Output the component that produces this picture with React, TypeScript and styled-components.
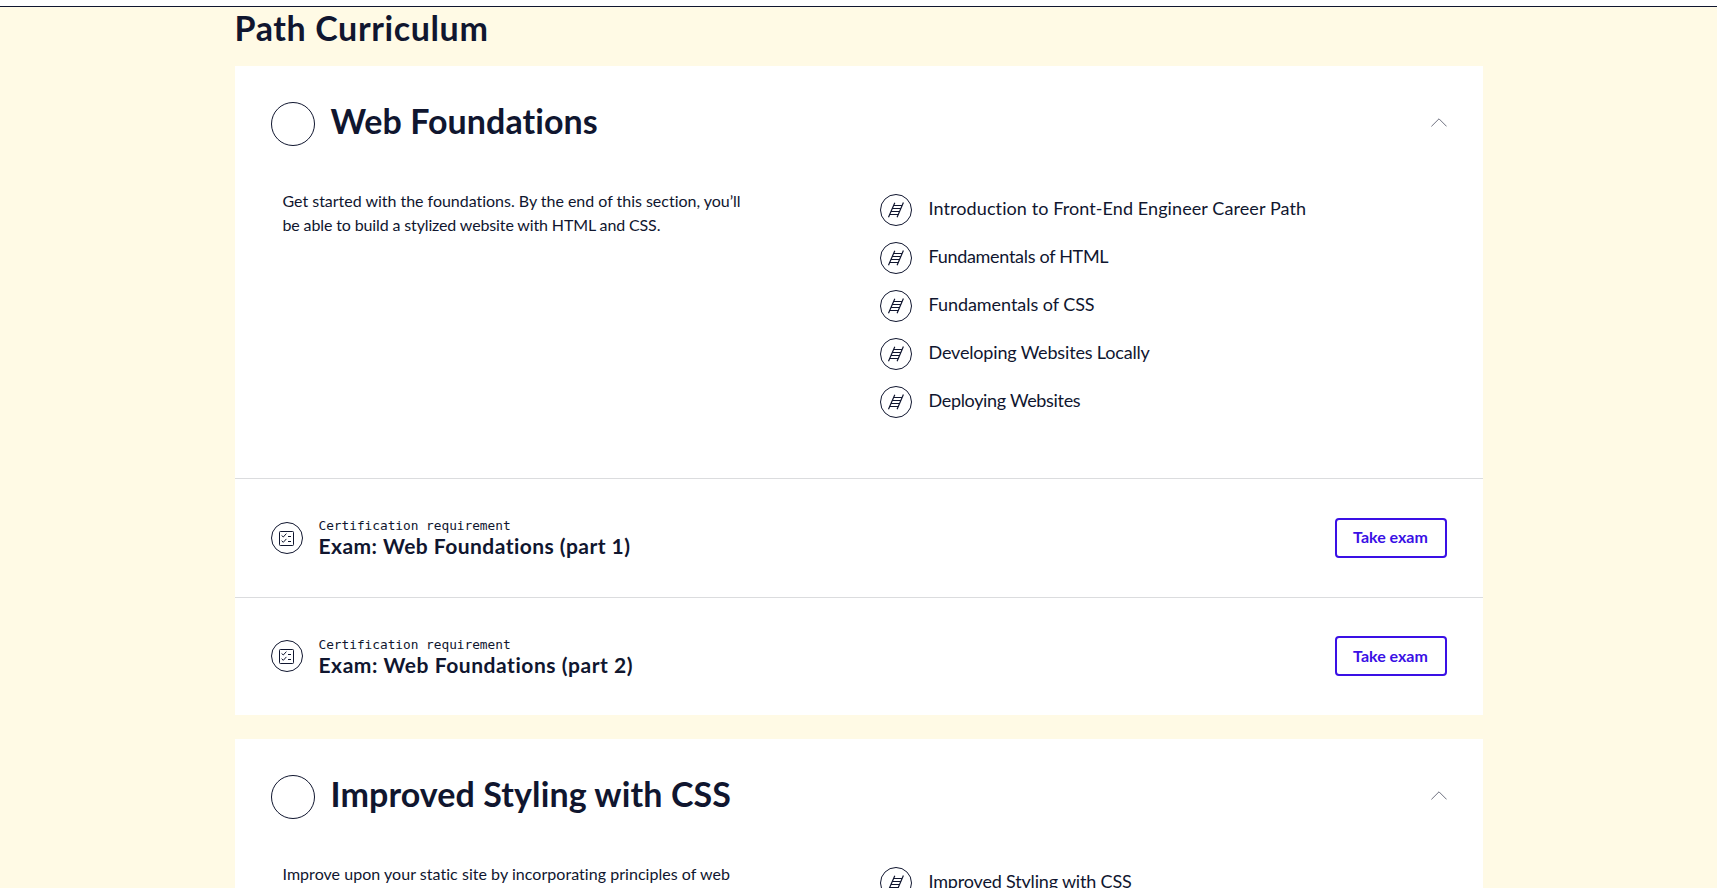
import React from 'react';
import styled, { createGlobalStyle } from 'styled-components';

const navy = '#10162f';
const hyper = '#3a10e5';

const GlobalStyle = createGlobalStyle`
  *, *::before, *::after { box-sizing: border-box; }
  html, body { height: 100%; }
  body {
    margin: 0;
    overflow: hidden;
    background: #fffae5;
    color: ${navy};
    font-family: Lato, "Liberation Sans", sans-serif;
    font-variant-ligatures: none;
  }
  h1, h2, h3, p, ul { margin: 0; padding: 0; font-weight: inherit; }
`;

const Page = styled.div`
  height: 888px;
  overflow: hidden;
`;

const TopBar = styled.div`
  height: 7px;
  background: #fff;
  border-bottom: 1px solid ${navy};
`;

const Content = styled.main`
  width: 1248px;
  margin: 0 auto;
`;

const PageTitle = styled.h1`
  height: 59px;
  font-size: 34px;
  font-weight: 700;
  line-height: 42px;
  letter-spacing: 0.62px;
`;

const Card = styled.section`
  margin-bottom: 24px;
  background: #fff;
`;

const CardHeader = styled.header`
  display: flex;
  align-items: center;
  gap: 16px;
  height: 116px;
  padding: 0 36px;
`;

const Progress = styled.span`
  width: 44px;
  height: 44px;
  border: 1px solid ${navy};
  border-radius: 50%;
`;

const CardTitle = styled.h2<{ $track: number }>`
  flex: 1;
  padding-bottom: 6px;
  font-size: 34px;
  font-weight: 700;
  line-height: 44px;
  letter-spacing: ${(p) => p.$track}px;
`;

const Chevron = styled.svg`
  display: block;
  margin-bottom: 3px;
`;

const CardBody = styled.div`
  display: grid;
  grid-template-columns: 597px 1fr;
  padding: 4px 36px 44px 48px;
`;

const Description = styled.p`
  padding-top: 3px;
  font-size: 16px;
  line-height: 24px;
`;

const Line = styled.span<{ $track: number }>`
  display: block;
  white-space: nowrap;
  letter-spacing: ${(p) => p.$track}px;
`;

const Modules = styled.ul`
  list-style: none;
  padding-top: 8px;
`;

const Module = styled.li<{ $track: number }>`
  display: flex;
  align-items: flex-start;
  gap: 17px;
  height: 48px;
  font-size: 18px;
  line-height: 28px;
  letter-spacing: ${(p) => p.$track}px;
`;

const Badge = styled.span`
  display: block;
  flex: none;
  width: 32px;
  height: 32px;
  border: 1px solid ${navy};
  border-radius: 50%;

  svg { display: block; margin: -1px; }
`;

const Exam = styled.div`
  display: flex;
  align-items: center;
  gap: 16px;
  height: 118.5px;
  padding: 0 36px;
  border-top: 1px solid #dbdcde;
`;

const ExamText = styled.div`
  flex: 1;
  padding-top: 1px;
`;

const Requirement = styled.p`
  font-family: "DejaVu Sans Mono", "Liberation Mono", monospace;
  font-size: 12.8px;
  line-height: 18px;
  letter-spacing: -0.02px;
`;

const ExamTitle = styled.h3<{ $track: number }>`
  margin-top: -2px;
  font-size: 21px;
  font-weight: 700;
  line-height: 26px;
  letter-spacing: ${(p) => p.$track}px;
`;

const ExamButton = styled.button`
  width: 112px;
  height: 40px;
  padding: 0 0 1px;
  border: 2px solid ${hyper};
  border-radius: 4px;
  background: #fff;
  color: ${hyper};
  font: 700 16px/24px Lato, sans-serif;
`;

const LadderIcon = () => (
  <svg width="32" height="32" viewBox="0 0 32 32" fill="none" stroke={navy} strokeWidth="1.2">
    <path d="M8.5 23.2 14.8 8.7M17.1 23.2 23.4 8.5" />
    <path d="M13.6 11.5H22M12.3 14.5H20.8M11 17.5H19.5M9.7 20.5H18.2" />
  </svg>
);

const ChecklistIcon = () => (
  <svg width="32" height="32" viewBox="0 0 32 32" fill="none" stroke={navy}>
    <rect x="8.5" y="9.5" width="14" height="14" rx="0.8" />
    <path d="M10.6 13.5 12.3 15 15.4 11.6M17 14.5H20M10.6 18.7 12.3 20.3 15.4 16.9M17 19.5H20" />
  </svg>
);

type Text = [string, number];

interface Unit {
  title: Text;
  description: Text[];
  modules: Text[];
  exams: Text[];
}

// Each text is paired with its letter spacing in pixels.
const units: Unit[] = [
  {
    title: ['Web Foundations', 0.07],
    description: [
      ['Get started with the foundations. By the end of this section, you’ll', -0.02],
      ['be able to build a stylized website with HTML and CSS.', -0.13],
    ],
    modules: [
      ['Introduction to Front-End Engineer Career Path', 0.09],
      ['Fundamentals of HTML', -0.3],
      ['Fundamentals of CSS', -0.05],
      ['Developing Websites Locally', -0.17],
      ['Deploying Websites', -0.33],
    ],
    exams: [
      ['Exam: Web Foundations (part 1)', 0.46],
      ['Exam: Web Foundations (part 2)', 0.55],
    ],
  },
  {
    title: ['Improved Styling with CSS', 0.1],
    description: [
      ['Improve upon your static site by incorporating principles of web', 0.04],
    ],
    modules: [['Improved Styling with CSS', -0.18]],
    exams: [],
  },
];

export default function App() {
  return (
    <>
      <GlobalStyle />
      <Page>
        <TopBar />
        <Content>
          <PageTitle>Path Curriculum</PageTitle>
          {units.map((unit) => (
            <Card key={unit.title[0]}>
              <CardHeader>
                <Progress />
                <CardTitle $track={unit.title[1]}>{unit.title[0]}</CardTitle>
                <Chevron width="16" height="9" viewBox="0 0 16 9" fill="none" stroke="#6e707f">
                  <path d="M0.4 8.4 8 0.8 15.6 8.4" />
                </Chevron>
              </CardHeader>
              <CardBody>
                <Description>
                  {unit.description.map(([text, track]) => (
                    <Line key={text} $track={track}>{text}</Line>
                  ))}
                </Description>
                <Modules>
                  {unit.modules.map(([text, track]) => (
                    <Module key={text} $track={track}>
                      <Badge><LadderIcon /></Badge>
                      {text}
                    </Module>
                  ))}
                </Modules>
              </CardBody>
              {unit.exams.map(([text, track]) => (
                <Exam key={text}>
                  <Badge><ChecklistIcon /></Badge>
                  <ExamText>
                    <Requirement>Certification requirement</Requirement>
                    <ExamTitle $track={track}>{text}</ExamTitle>
                  </ExamText>
                  <ExamButton>Take exam</ExamButton>
                </Exam>
              ))}
            </Card>
          ))}
        </Content>
      </Page>
    </>
  );
}
